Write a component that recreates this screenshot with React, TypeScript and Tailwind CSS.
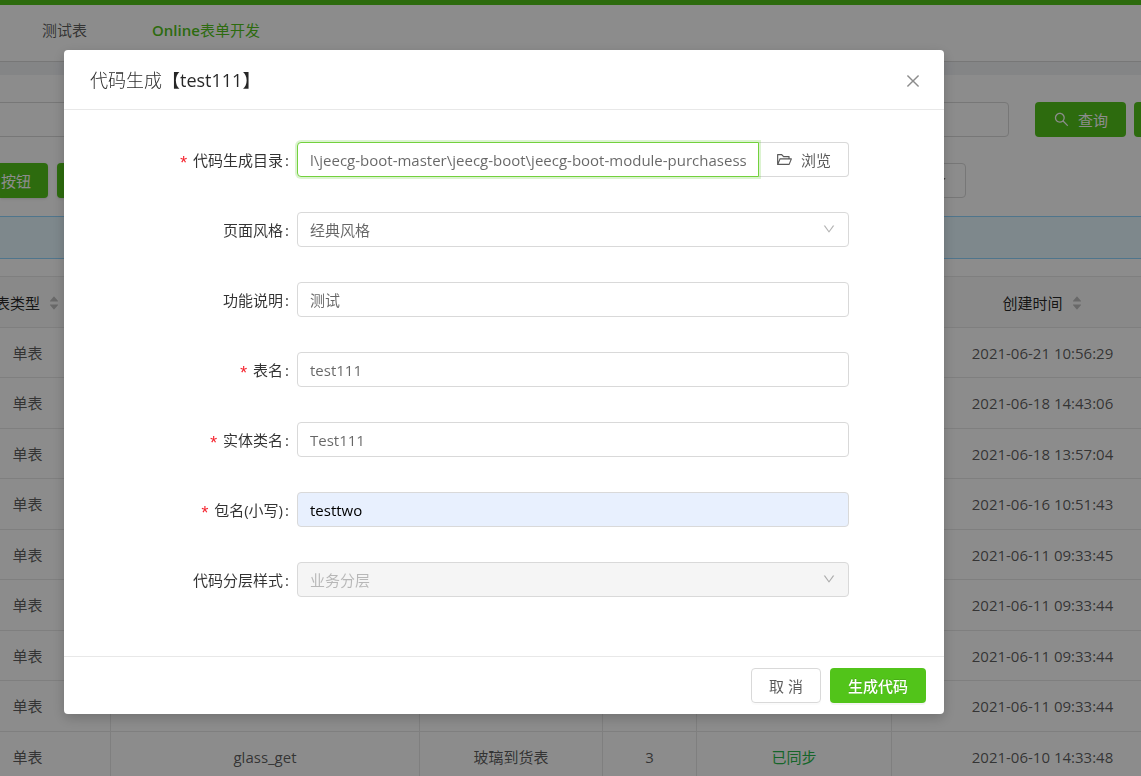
import React, { useState } from 'react';
import {
  AiFillCaretDown,
  AiFillCaretUp,
  AiOutlineClose,
  AiOutlineDown,
  AiOutlineFolderOpen,
  AiOutlineSearch,
} from 'react-icons/ai';

interface TableRow {
  type: string;
  name?: string;
  desc?: string;
  version?: number;
  synced?: boolean;
  createTime: string;
}

const rows: TableRow[] = [
  { type: '单表', createTime: '2021-06-21 10:56:29' },
  { type: '单表', createTime: '2021-06-18 14:43:06' },
  { type: '单表', createTime: '2021-06-18 13:57:04' },
  { type: '单表', createTime: '2021-06-16 10:51:43' },
  { type: '单表', createTime: '2021-06-11 09:33:45' },
  { type: '单表', createTime: '2021-06-11 09:33:44' },
  { type: '单表', createTime: '2021-06-11 09:33:44' },
  { type: '单表', createTime: '2021-06-11 09:33:44' },
  { type: '单表', name: 'glass_get', desc: '玻璃到货表', version: 3, synced: true, createTime: '2021-06-10 14:33:48' },
];

const inputClass =
  'h-[35px] w-full min-w-0 rounded border border-[#d9d9d9] bg-white px-3 text-black/60 outline-none';

const Sorter = () => (
  <span className="ml-2 inline-flex flex-col text-[#bfbfbf]">
    <AiFillCaretUp size={12} className="-mb-1" />
    <AiFillCaretDown size={12} />
  </span>
);

interface FormItemProps {
  id: string;
  label: string;
  required?: boolean;
  children: React.ReactNode;
}

const FormItem: React.FC<FormItemProps> = ({ id, label, required, children }) => (
  <div className="grid grid-cols-12 items-center">
    <label htmlFor={id} className="col-span-3 flex items-center justify-end pr-2 whitespace-nowrap text-black/80">
      {required && (
        <span className="mr-1 h-4 font-['Liberation_Mono'] text-[18px] leading-6 text-[#f5222d]">*</span>
      )}
      {label}
      <span className="ml-0.5">:</span>
    </label>
    <div className="col-span-8">{children}</div>
  </div>
);

interface SelectProps {
  id: string;
  value: string;
  disabled?: boolean;
}

const Select: React.FC<SelectProps> = ({ id, value, disabled }) => (
  <div className="relative">
    <select
      id={id}
      defaultValue={value}
      disabled={disabled}
      className="h-[35px] w-full appearance-none rounded border border-[#d9d9d9] bg-white px-3 text-black/60 outline-none disabled:bg-[#f5f5f5] disabled:text-black/25 disabled:opacity-100"
    >
      <option>{value}</option>
    </select>
    <AiOutlineDown size={14} className="pointer-events-none absolute top-[10px] right-[13px] text-black/30" />
  </div>
);

const ListPage = () => (
  <div className="min-h-screen bg-[#f0f2f5]">
    <div className="h-[5px] bg-[#52c41a]" />
    <nav className="flex h-[57px] items-center gap-[65px] border-b border-[#d9d9d9] bg-white pr-4 pb-1.5 pl-[42px]">
      <a href="#test" className="text-black/65">测试表</a>
      <a href="#online" className="text-[#52c41a]"><span className="font-semibold">Online</span>表单开发</a>
    </nav>

    <main className="mt-[13px] bg-white pt-[27px]">
      <div className="flex h-[35px]">
        <input aria-label="表名" className="-ml-4 w-1/4 rounded border border-[#d9d9d9] px-3" />
        <input aria-label="表描述" className="ml-auto w-1/4 rounded border border-[#d9d9d9] px-3" />
        <button className="ml-[26px] flex w-[91px] items-center justify-center gap-2 rounded bg-[#52c41a] text-white">
          <AiOutlineSearch size={17} />
          查询
        </button>
        <button aria-label="重置" className="ml-2 w-[7px] rounded-l bg-[#52c41a]" />
      </div>

      <div className="mt-[26px] flex h-[35px] gap-[9px]">
        <button className="flex w-12 justify-end rounded-r bg-[#52c41a] pt-1.5 pr-[17px] whitespace-nowrap text-white shadow-sm">
          按钮
        </button>
        <button aria-label="新增" className="w-24 rounded bg-[#52c41a] shadow-sm" />
        <button
          aria-label="批量操作"
          className="mr-[175px] ml-auto flex w-[120px] items-center justify-end rounded border border-[#d9d9d9] pr-[18px] text-black/65"
        >
          <AiOutlineDown size={12} />
        </button>
      </div>

      <div className="mt-[18px] h-[43px] border-y border-[#91d5ff] bg-[#e6f7ff]" />

      <div className="mt-[17px] overflow-hidden">
        <table className="-ml-[55px] w-[calc(100%+108px)] table-fixed border-separate border-spacing-0 text-center text-black/65">
          <colgroup>
            <col className="w-[166px]" />
            <col className="w-[309px]" />
            <col className="w-[183px]" />
            <col className="w-[94px]" />
            <col className="w-[195px]" />
            <col />
          </colgroup>
          <thead>
            <tr className="h-[52px] bg-[#fafafa] text-black/85 [&>th]:border-y [&>th]:border-r [&>th]:border-[#e8e8e8] [&>th]:pt-0.5 [&>th]:font-normal">
              <th>
                <span className="flex items-center justify-center whitespace-nowrap">表类型<Sorter /></span>
              </th>
              <th />
              <th />
              <th />
              <th />
              <th>
                <span className="flex items-center justify-center">创建时间<Sorter /></span>
              </th>
            </tr>
          </thead>
          <tbody>
            {rows.map((row, i) => (
              <tr
                key={i}
                className="odd:h-[50px] even:h-[51px] [&>td]:border-r [&>td]:border-b [&>td]:border-[#e8e8e8]"
              >
                <td>{row.type}</td>
                <td>{row.name}</td>
                <td>{row.desc}</td>
                <td>{row.version}</td>
                <td className="text-[#28b94b]">{row.synced && '已同步'}</td>
                <td>{row.createTime}</td>
              </tr>
            ))}
          </tbody>
        </table>
      </div>
    </main>
  </div>
);

const CodeGeneratorModal = () => {
  const [form, setForm] = useState({
    path: 'l\\jeecg-boot-master\\jeecg-boot\\jeecg-boot-module-purchasess',
    desc: '测试',
    table: 'test111',
    entity: 'Test111',
    packageName: 'testtwo',
  });

  const handleChange = (e: React.ChangeEvent<HTMLInputElement>) => {
    setForm({ ...form, [e.target.id]: e.target.value });
  };

  return (
    <div className="fixed inset-0 flex items-start bg-black/45 pt-[50px] pr-[197px] pl-16">
      <div role="dialog" aria-labelledby="modal-title" className="flex-1 rounded bg-white shadow-[0_4px_13px_rgba(0,0,0,0.2)]">
        {/* 标题 */}
        <div className="flex h-[60px] items-center justify-between border-b border-[#e8e8e8] px-[26px]">
          <h2 id="modal-title" className="text-[18px] font-light text-black/85">
            代码生成<span className="font-medium">【test111】</span>
          </h2>
          <button aria-label="关闭" className="-mr-1 pt-0.5 text-black/45">
            <AiOutlineClose size={18} />
          </button>
        </div>

        {/* 表单 */}
        <form className="flex flex-col gap-[35px] px-[26px] pt-8 pb-[59px]">
          <FormItem id="path" label="代码生成目录" required>
            <div className="flex">
              <input
                id="path"
                value={form.path}
                onChange={handleChange}
                className="relative h-[35px] min-w-0 flex-1 rounded-l border border-[#73d13d] bg-white px-3 text-right text-black/60 shadow-[0_0_0_2px_rgba(82,196,26,0.2)] outline-none"
              />
              <button
                type="button"
                className="flex w-[90px] items-center justify-center gap-2 rounded-r border border-l-0 border-[#d9d9d9] text-black/65"
              >
                <AiOutlineFolderOpen size={17} />
                浏览
              </button>
            </div>
          </FormItem>
          <FormItem id="style" label="页面风格">
            <Select id="style" value="经典风格" />
          </FormItem>
          <FormItem id="desc" label="功能说明">
            <input id="desc" value={form.desc} onChange={handleChange} className={inputClass} />
          </FormItem>
          <FormItem id="table" label="表名" required>
            <input id="table" value={form.table} onChange={handleChange} className={inputClass} />
          </FormItem>
          <FormItem id="entity" label="实体类名" required>
            <input id="entity" value={form.entity} onChange={handleChange} className={inputClass} />
          </FormItem>
          <FormItem id="packageName" label="包名(小写)" required>
            <input
              id="packageName"
              value={form.packageName}
              onChange={handleChange}
              className="h-[35px] w-full rounded border border-[#d9d9d9] bg-[#e8f0fe] px-3 text-black outline-none"
            />
          </FormItem>
          <FormItem id="layer" label="代码分层样式">
            <Select id="layer" value="业务分层" disabled />
          </FormItem>
        </form>

        {/* 底部按钮 */}
        <div className="flex justify-end gap-[9px] border-t border-[#e8e8e8] px-[18px] py-[11px]">
          <button className="h-[35px] w-[70px] rounded border border-[#d9d9d9] text-black/65 shadow-[0_2px_0_rgba(0,0,0,0.015)]">
            取 消
          </button>
          <button className="h-[35px] w-24 rounded bg-[#52c41a] font-medium text-white shadow-[0_2px_0_rgba(0,0,0,0.045)] text-shadow-[0_-1px_0_rgba(0,0,0,0.12)]">
            生成代码
          </button>
        </div>
      </div>
    </div>
  );
};

const App = () => (
  <div className="h-screen overflow-hidden font-['Open_Sans','Noto_Sans_CJK_SC',sans-serif] text-[15px] leading-6">
    <ListPage />
    <CodeGeneratorModal />
  </div>
);

export default App;
